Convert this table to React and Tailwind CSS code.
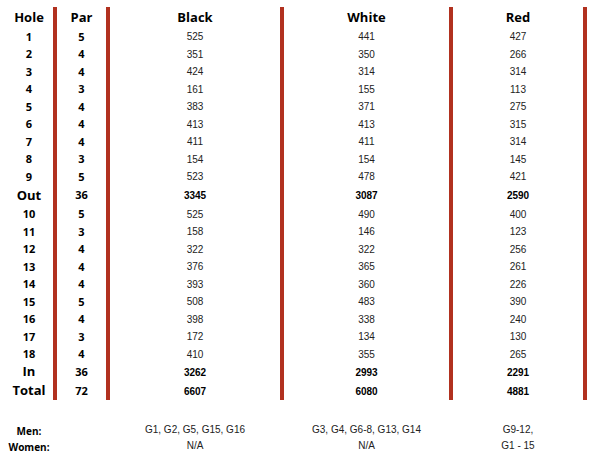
const holes = [
  [1, 5, 525, 441, 427],
  [2, 4, 351, 350, 266],
  [3, 4, 424, 314, 314],
  [4, 3, 161, 155, 113],
  [5, 4, 383, 371, 275],
  [6, 4, 413, 413, 315],
  [7, 4, 411, 411, 314],
  [8, 3, 154, 154, 145],
  [9, 5, 523, 478, 421],
]

const back = [
  [10, 5, 525, 490, 400],
  [11, 3, 158, 146, 123],
  [12, 4, 322, 322, 256],
  [13, 4, 376, 365, 261],
  [14, 4, 393, 360, 226],
  [15, 5, 508, 483, 390],
  [16, 4, 398, 338, 240],
  [17, 3, 172, 134, 130],
  [18, 4, 410, 355, 265],
]

const head = "font-['Open_Sans',sans-serif] font-bold text-black"
const data = "font-['Liberation_Sans',Arial,sans-serif] text-[10px] text-[#222]"
// cell with the red divider on its right
const cell = 'flex h-full items-center justify-center pt-[2px] border-r-4 border-[#b1311f]'

function Row({ h, cells, label, bold, big }) {
  const [hole, par, black, white, red] = cells
  const val = bold ? data + ' font-bold text-black' : data
  return (
    <div className="flex" style={{ height: h }}>
      <div className={`w-[52px] ${cell}`}>
        <span className={`${head} ${big ? 'text-[13px]' : 'text-[11px]'}`}>
          {label ?? hole}
        </span>
      </div>
      <div className={`w-[53px] ${cell}`}>
        <span className={`${head} text-[11px]`}>{par}</span>
      </div>
      <div className={`w-[174px] ${cell}`}>
        <span className={val}>{black}</span>
      </div>
      <div className={`w-[169px] ${cell}`}>
        <span className={val}>{white}</span>
      </div>
      <div className={`w-[134px] ${cell}`}>
        <span className={val}>{red}</span>
      </div>
    </div>
  )
}

function FootRow({ label, black, white, red }) {
  return (
    <div className="flex h-4 items-center">
      <div className="w-[52px] pr-1 text-center">
        <span className={`${head} text-[10px]`}>{label}</span>
      </div>
      <div className="w-[53px]" />
      <div className={`w-[174px] pr-1 text-center ${data}`}>{black}</div>
      <div className={`w-[169px] pr-1 text-center ${data}`}>{white}</div>
      <div className={`w-[134px] pr-1 text-center ${data}`}>{red}</div>
    </div>
  )
}

export default function App() {
  return (
    <div className="h-[464px] w-[599px] bg-white pl-[5px] pt-[7px]">
      <div className="flex h-5">
        {[
          ['Hole', 'w-[52px]'],
          ['Par', 'w-[53px]'],
          ['Black', 'w-[174px]'],
          ['White', 'w-[169px]'],
          ['Red', 'w-[134px]'],
        ].map(([t, w]) => (
          <div key={t} className={`${w} ${cell}`}>
            <span className={`${head} text-[13px]`}>{t}</span>
          </div>
        ))}
      </div>

      {holes.map((r) => (
        <Row key={r[0]} h={17.5} cells={r} />
      ))}
      <Row h={20} cells={['', 36, 3345, 3087, 2590]} label="Out" bold big />
      {back.map((r) => (
        <Row key={r[0]} h={17.5} cells={r} />
      ))}
      <Row h={18} cells={['', 36, 3262, 2993, 2291]} label="In" bold big />
      <Row h={20} cells={['', 72, 6607, 6080, 4881]} label="Total" bold big />

      <div className="mt-[21px]">
        <FootRow label="Men:" black="G1, G2, G5, G15, G16" white="G3, G4, G6-8, G13, G14" red="G9-12," />
        <FootRow label="Women:" black="N/A" white="N/A" red="G1 - 15" />
      </div>
    </div>
  )
}
